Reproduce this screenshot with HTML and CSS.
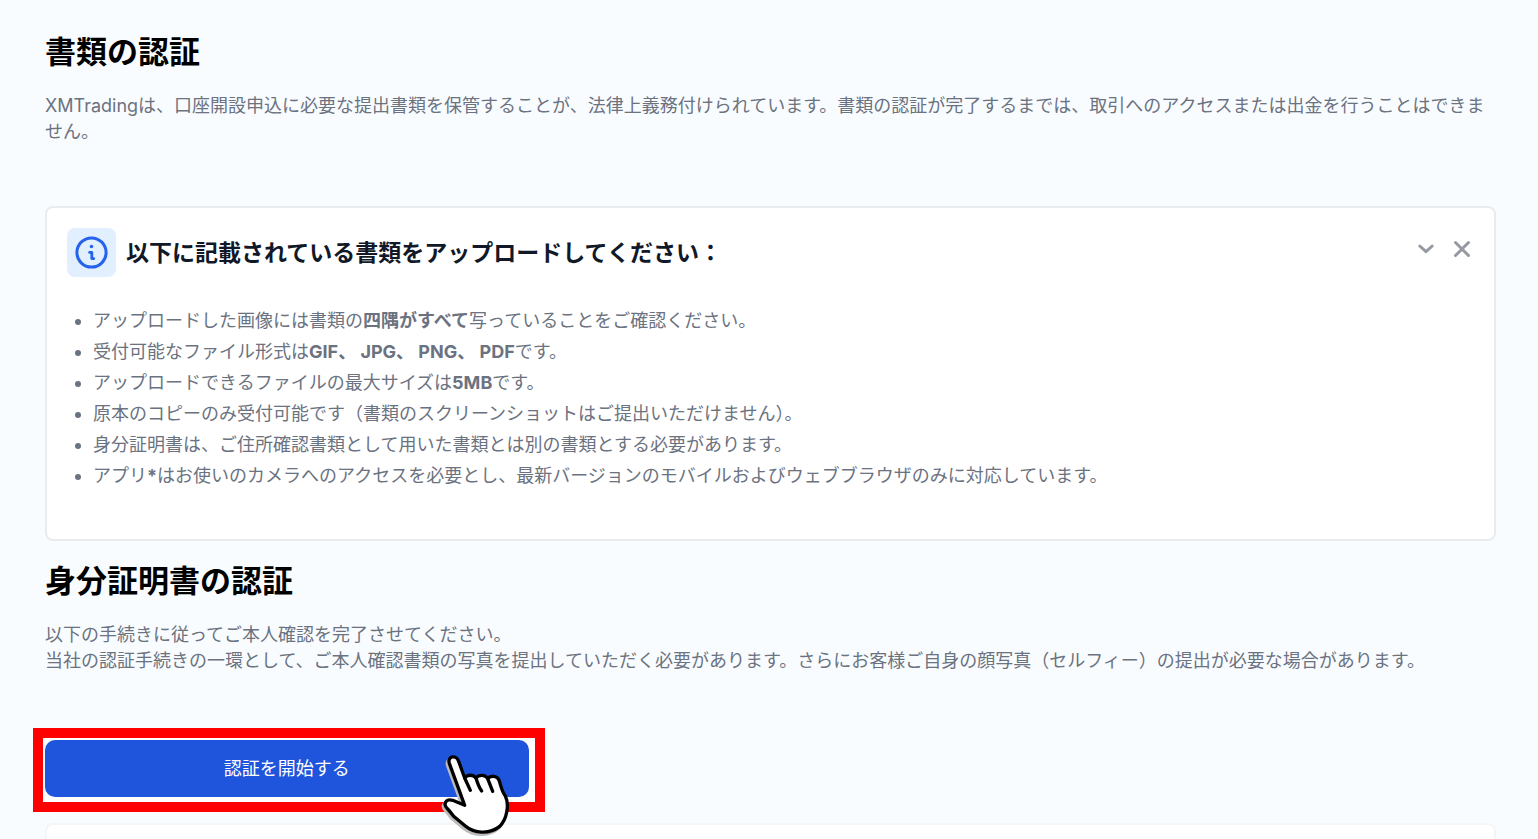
FILE: index.html
```html
<!DOCTYPE html>
<html lang="ja">
<head>
    <meta charset="UTF-8">
    <meta name="viewport" content="width=device-width, initial-scale=1.0">
    <title>書類の認証</title>
    <link rel="stylesheet" href="styles.css">
</head>
<body>
    <main class="page">
        <section class="intro">
            <h1>書類の認証</h1>
            <p>XMTradingは、口座開設申込に必要な提出書類を保管することが、法律上義務付けられています。書類の認証が完了するまでは、取引へのアクセスまたは出金を行うことはできません。</p>
        </section>

        <section class="card notice">
            <header class="notice-header">
                <span class="notice-icon">
                    <svg viewBox="0 0 34 34" width="34" height="34" fill="none" stroke="#2563eb" aria-hidden="true">
                        <circle cx="16.5" cy="16.5" r="14.6" stroke-width="3"/>
                        <circle cx="16.5" cy="10.5" r="1.8" fill="#2563eb" stroke="none"/>
                        <path d="M14.6 16.4h2.2v6.2h2" stroke-width="2.8" stroke-linecap="round" stroke-linejoin="round"/>
                    </svg>
                </span>
                <h2>以下に記載されている書類をアップロードしてください：</h2>
                <div class="notice-tools">
                    <button type="button" aria-label="折りたたむ">
                        <svg viewBox="0 0 20 20" width="20" height="20" aria-hidden="true"><path d="M3.8 7l6.2 5.6L16.200 7"/></svg>
                    </button>
                    <button type="button" aria-label="閉じる">
                        <svg viewBox="0 0 20 20" width="20" height="20" aria-hidden="true"><path d="M3.500 3.500l13 13M16.500 3.500l-13 13"/></svg>
                    </button>
                </div>
            </header>
            <ul class="notice-list">
                <li>アップロードした画像には書類の<strong>四隅がすべて</strong>写っていることをご確認ください。</li>
                <li>受付可能なファイル形式は<strong>GIF、 JPG、 PNG、 PDF</strong>です。</li>
                <li>アップロードできるファイルの最大サイズは<strong>5MB</strong>です。</li>
                <li>原本のコピーのみ受付可能です（書類のスクリーンショットはご提出いただけません）。</li>
                <li>身分証明書は、ご住所確認書類として用いた書類とは別の書類とする必要があります。</li>
                <li>アプリ<strong>*</strong>はお使いのカメラへのアクセスを必要とし、最新バージョンのモバイルおよびウェブブラウザのみに対応しています。</li>
            </ul>
        </section>

        <section class="identity">
            <h1>身分証明書の認証</h1>
            <p>以下の手続きに従ってご本人確認を完了させてください。<br>当社の認証手続きの一環として、ご本人確認書類の写真を提出していただく必要があります。さらにお客様ご自身の顔写真（セルフィー）の提出が必要な場合があります。</p>
            <div class="action">
                <button type="button" class="start">認証を開始する</button>
                <svg class="pointer" viewBox="0 0 228 267" width="76" height="89" aria-hidden="true">
                    <defs>
                        <path id="hand" d="M34 40C27 18 55 13 62 34L80 84C87 73 106 73 114 84C122 73 143 73 149 86C158 75 177 77 183 90C189 108 191 124 202 138C214 162 208 208 184 230C154 254 108 250 82 228L46 198C40 190 36 184 29 177C13 162 24 145 44 151L80 166Z"/>
                    </defs>
                    <use href="#hand" class="pointer-shadow" x="-5" y="7"/>
                    <use href="#hand" class="pointer-hand"/>
                    <path class="pointer-lines" d="M80 84L97 121M114 84C118 98 123 112 131 123M149 86L164 124"/>
                </svg>
            </div>
        </section>

        <section class="card next"></section>
    </main>
</body>
</html>
```
FILE: styles.css
```css
* {
    box-sizing: border-box;
}
body {
    margin: 0;
    background-color: #f9fcff;
    color: #6b7280;
    font-family: Inter, "Noto Sans CJK JP", sans-serif;
    font-size: 18px;
    line-height: 26px;
}
h1, h2, p, ul {
    margin: 0;
    padding: 0;
}
h1 {
    margin-bottom: 21px;
    color: #000;
    font-size: 31px;
    line-height: 40px;
}
button {
    border: 0;
    font: inherit;
    cursor: pointer;
}
.page {
    display: flex;
    flex-direction: column;
    min-height: 100vh;
    padding: 32px 42px 0 45px;
}
.card {
    background-color: #fff;
    border: 2px solid #e9ebef;
    border-radius: 8px;
}

.notice {
    margin: 61px 0 20px;
    padding: 20px 20px 48px;
}
.notice-header {
    display: flex;
    align-items: center;
    gap: 10px;
    margin-bottom: 28px;
}
.notice-icon {
    display: flex;
    flex: none;
    align-items: center;
    justify-content: center;
    width: 49px;
    height: 49px;
    background-color: #e1effe;
    border-radius: 8px;
}
h2 {
    flex: 1;
    color: #111827;
    font-size: 23px;
    line-height: 32px;
}
.notice-tools {
    display: flex;
    align-self: flex-start;
    gap: 8px;
    padding-top: 7px;
}
.notice-tools button {
    display: flex;
    padding: 4px 2px 4px 6px;
    background: none;
}
.notice-tools svg {
    fill: none;
    stroke: #9599a1;
    stroke-width: 3;
    stroke-linecap: round;
    stroke-linejoin: round;
}
.notice-list {
    padding-left: 26px;
    line-height: 31px;
}

.action {
    position: relative;
    z-index: 0;
    width: 33.3333%;
    margin: 66px 0 26px;
}
/* red frame around the button */
.action::before {
    content: "";
    position: absolute;
    z-index: -1;
    inset: -12px -16px -15px -12px;
    background-color: #fff;
    border: 10px solid #f00;
}
.start {
    display: block;
    width: 100%;
    padding: 15px;
    line-height: 27px;
    color: #fff;
    background-color: #1f55dc;
    border-radius: 10px;
}
.pointer {
    position: absolute;
    right: 15px;
    top: 10px;
    overflow: visible;
    stroke-width: 10;
    stroke-linejoin: round;
    stroke-linecap: round;
}
.pointer-shadow {
    fill: #bbb;
    stroke: #bbb;
}
.pointer-hand {
    fill: #fff;
    stroke: #000;
}
.pointer-lines {
    fill: none;
    stroke: #000;
}

.next {
    flex: 1;
    border-color: #f3f5f8;
    border-bottom: 0;
    border-radius: 8px 8px 0 0;
}
```
